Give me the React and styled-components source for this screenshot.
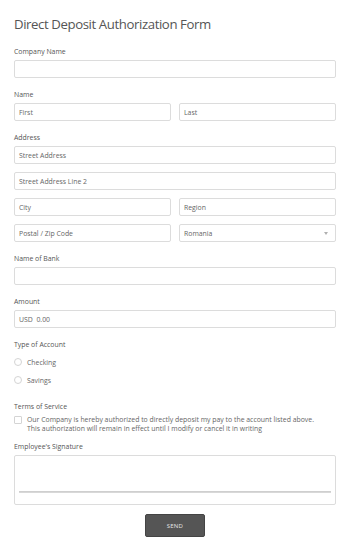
import React from 'react';
import styled, { createGlobalStyle } from 'styled-components';

const GlobalStyle = createGlobalStyle`
  html, body {
    margin: 0;
    padding: 0;
    background: #ffffff;
  }
  body {
    font-family: "Open Sans", "DejaVu Sans", sans-serif;
    color: #555555;
  }
`

const Page = styled.div`
  width: 350px;
  padding: 14px 14px 14px 14px;
  box-sizing: border-box;
`

const Title = styled.h1`
  margin: 0 0 13px 0;
  font-size: 13.2px;
  line-height: 20px;
  letter-spacing: -0.4px;
  font-weight: 400;
  color: #555555;
`

const Field = styled.div`
  margin-bottom: ${p => p.$gap || '12px'};
`

const Label = styled.div`
  font-size: 6.9px;
  line-height: 9px;
  color: #555555;
  margin-bottom: 4px;
`

const Stack = styled.div`
  display: flex;
  flex-direction: column;
  gap: 8px;
`

const Row = styled.div`
  display: grid;
  grid-template-columns: 1fr 1fr;
  gap: 8px;
`

const Input = styled.div`
  box-sizing: border-box;
  height: 18px;
  border: 1px solid #dcdcdc;
  border-radius: 2px;
  padding: 0 4px;
  display: flex;
  align-items: center;
  justify-content: space-between;
  font-size: 6.9px;
  color: #666666;
  background: #ffffff;
`

const Caret = styled.span`
  width: 0;
  height: 0;
  border-left: 2.5px solid transparent;
  border-right: 2.5px solid transparent;
  border-top: 3px solid #b0b0b0;
  margin-right: 3px;
`

const Options = styled.div`
  padding-bottom: 5px;
`

const Option = styled.div`
  display: flex;
  align-items: center;
  gap: 5px;
  height: 10px;
  font-size: 6.9px;
  color: #666666;
  margin-top: 8px;
`

const Radio = styled.span`
  width: 6px;
  height: 6px;
  border: 1px solid #d4d4d4;
  border-radius: 50%;
  flex: none;
`

const Check = styled.span`
  width: 6px;
  height: 6px;
  border: 1px solid #d4d4d4;
  border-radius: 1px;
  flex: none;
  margin-top: 1px;
`

const Terms = styled.div`
  display: flex;
  align-items: flex-start;
  gap: 5px;
  font-size: 6.9px;
  line-height: 9px;
  color: #666666;
`

const SignBox = styled.div`
  box-sizing: border-box;
  height: 50px;
  border: 1px solid #dcdcdc;
  border-radius: 2px;
  padding: 35px 4px 0 4px;
`

const SignLine = styled.div`
  height: 1px;
  background: #cfcfcf;
  border-bottom: 1px solid #d8d8d8;
`

const Footer = styled.div`
  display: flex;
  justify-content: center;
`

const SendButton = styled.button`
  width: 60px;
  height: 23px;
  border: 1px solid #444444;
  border-radius: 2px;
  background: #555555;
  color: #e6e6e6;
  font-family: "Open Sans", sans-serif;
  font-size: 6px;
  letter-spacing: 0.2px;
  cursor: pointer;
`

function App() {
  return (
    <Page>
      <GlobalStyle />
      <Title>Direct Deposit Authorization Form</Title>

      <Field>
        <Label>Company Name</Label>
        <Input />
      </Field>

      <Field>
        <Label>Name</Label>
        <Row>
          <Input>First</Input>
          <Input>Last</Input>
        </Row>
      </Field>

      <Field>
        <Label>Address</Label>
        <Stack>
          <Input>Street Address</Input>
          <Input>Street Address Line 2</Input>
          <Row>
            <Input>City</Input>
            <Input>Region</Input>
          </Row>
          <Row>
            <Input>Postal / Zip Code</Input>
            <Input>Romania<Caret /></Input>
          </Row>
        </Stack>
      </Field>

      <Field>
        <Label>Name of Bank</Label>
        <Input />
      </Field>

      <Field>
        <Label>Amount</Label>
        <Input>USD&nbsp; 0.00</Input>
      </Field>

      <Field>
        <Label>Type of Account</Label>
        <Options>
          <Option><Radio />Checking</Option>
          <Option><Radio />Savings</Option>
        </Options>
      </Field>

      <Field $gap="9px">
        <Label>Terms of Service</Label>
        <Terms>
          <Check />
          <span>
            Our Company is hereby authorized to directly deposit my pay to the account listed above.
            <br />
            This authorization will remain in effect until I modify or cancel it in writing
          </span>
        </Terms>
      </Field>

      <Field $gap="9px">
        <Label>Employee's Signature</Label>
        <SignBox>
          <SignLine />
        </SignBox>
      </Field>

      <Footer>
        <SendButton>SEND</SendButton>
      </Footer>
    </Page>
  );
}

export default App
